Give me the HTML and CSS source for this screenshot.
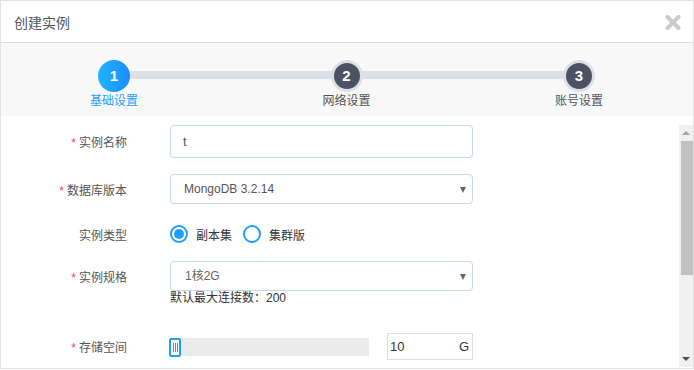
FILE: index.html
```html
<!DOCTYPE html>
<html>
<head>
  <meta charset="utf-8">
  <title>创建实例</title>
  <link rel="stylesheet" href="styles.css">
</head>
<body>
  <div class="dialog">
    <div class="dialog-header">
      <span class="dialog-title">创建实例</span>
      <svg class="close-icon" width="16" height="15" viewBox="0 0 16 15">
        <path d="M2.5 2 L13.5 13 M13.5 2 L2.5 13" stroke="#cbcbcb" stroke-width="4" stroke-linecap="round"/>
      </svg>
    </div>

    <!-- Steps -->
    <div class="steps">
      <div class="steps-line"></div>
      <div class="step active">
        <div class="step-circle">1</div>
        <div class="step-label">基础设置</div>
      </div>
      <div class="step">
        <div class="step-circle">2</div>
        <div class="step-label">网络设置</div>
      </div>
      <div class="step">
        <div class="step-circle">3</div>
        <div class="step-label">账号设置</div>
      </div>
    </div>

    <!-- Form -->
    <div class="dialog-body">
      <div class="form-area">
        <div class="form-row">
          <label class="form-label"><span class="req">*</span>实例名称</label>
          <input class="text-input" type="text" value="t">
        </div>
        <div class="form-row row-version">
          <label class="form-label"><span class="req">*</span>数据库版本</label>
          <div class="select-box">MongoDB 3.2.14<span class="caret"></span></div>
        </div>
        <div class="form-row row-type">
          <label class="form-label">实例类型</label>
          <div class="radio-group">
            <span class="radio checked"></span><span class="radio-text">副本集</span>
            <span class="radio"></span><span class="radio-text">集群版</span>
          </div>
        </div>
        <div class="form-row row-spec">
          <label class="form-label"><span class="req">*</span>实例规格</label>
          <div class="select-box spec">1核2G<span class="caret"></span></div>
        </div>
        <div class="form-hint">默认最大连接数：200</div>
        <div class="form-row row-storage">
          <label class="form-label"><span class="req">*</span>存储空间</label>
          <div class="slider">
            <div class="slider-handle"><i></i><i></i><i></i></div>
          </div>
          <div class="size-input"><span>10</span><span>G</span></div>
        </div>
      </div>

      <div class="scrollbar">
        <div class="scroll-btn"><span class="arrow-up"></span></div>
        <div class="scroll-track">
          <div class="scroll-thumb"></div>
        </div>
        <div class="scroll-btn"><span class="arrow-down"></span></div>
      </div>
    </div>
  </div>
</body>
</html>
```

FILE: styles.css
```css
body {
  margin: 0;
  background-color: #fff;
  font-family: "Liberation Sans", "Noto Sans CJK SC", sans-serif;
  font-size: 12px;
  color: #555;
}

.dialog {
  width: 694px;
  height: 369px;
  box-sizing: border-box;
  border: 1px solid #e2e2e2;
  background-color: #fff;
  overflow: hidden;
}

.dialog-header {
  height: 41px;
  border-bottom: 1px solid #dcdce6;
  display: flex;
  align-items: center;
  justify-content: space-between;
  padding: 0 12px 0 13px;
}

.dialog-title {
  font-size: 14px;
  color: #555;
}

.close-icon {
  display: block;
  margin-top: 1px;
}

.steps {
  position: relative;
  height: 73px;
  background-color: #f8f8f8;
  display: flex;
  justify-content: space-between;
  padding: 0 82px 0 81px;
}

.steps-line {
  position: absolute;
  left: 128px;
  right: 112px;
  top: 28px;
  height: 8px;
  background-color: #dcdfe6;
}

.step {
  position: relative;
  width: 64px;
  display: flex;
  flex-direction: column;
  align-items: center;
  padding-top: 17px;
}

.step-circle {
  width: 26px;
  height: 26px;
  border-radius: 50%;
  border: 3px solid #dcdfe6;
  background-color: #4c5261;
  color: #fff;
  font-size: 15px;
  font-weight: bold;
  line-height: 26px;
  text-align: center;
}

.step.active .step-circle {
  width: 32px;
  height: 32px;
  border: none;
  line-height: 32px;
  background: linear-gradient(90deg, #1fb5fe, #1b8cff);
}

.step-label {
  margin-top: 1px;
  font-size: 12px;
  line-height: 16px;
  color: #555;
}

.step.active .step-label {
  color: #1e9fff;
}

.dialog-body {
  display: flex;
  padding-top: 9px;
}

.form-area {
  flex: 1;
  height: 242px;
  overflow: hidden;
}

.form-row {
  display: flex;
  align-items: center;
}

.form-label {
  width: 126px;
  margin-right: 43px;
  text-align: right;
  color: #555;
  font-size: 12px;
}

.req {
  color: #f44;
  margin-right: 3px;
}

.text-input {
  width: 303px;
  height: 33px;
  box-sizing: border-box;
  border: 1px solid #c9d6e4;
  border-radius: 4px;
  padding: 0 12px;
  font-family: inherit;
  font-size: 13px;
  color: #555;
  outline: none;
}

.row-version {
  margin-top: 16px;
}

.select-box {
  position: relative;
  width: 303px;
  height: 30px;
  box-sizing: border-box;
  border: 1px solid #c9d6e4;
  border-radius: 4px;
  padding-left: 13px;
  line-height: 28px;
  font-size: 12px;
  color: #555;
}

.select-box.spec {
  padding-left: 14px;
  color: #666;
}

.caret {
  position: absolute;
  right: 6px;
  top: 12px;
  border-left: 3.5px solid transparent;
  border-right: 3.5px solid transparent;
  border-top: 6px solid #666;
}

.row-type {
  margin-top: 15px;
  height: 30px;
}

.radio-group {
  display: flex;
  align-items: center;
}

.radio {
  width: 14px;
  height: 14px;
  border: 2px solid #1e9fff;
  border-radius: 50%;
  position: relative;
}

.radio.checked::after {
  content: "";
  position: absolute;
  left: 2px;
  top: 2px;
  width: 10px;
  height: 10px;
  border-radius: 50%;
  background-color: #1e9fff;
}

.radio-text {
  margin: 0 11px 0 8px;
  color: #333;
}

.row-spec {
  margin-top: 12px;
}

.form-hint {
  margin-left: 169px;
  line-height: 14px;
  color: #333;
}

.row-storage {
  margin-top: 28px;
}

.slider {
  width: 199px;
  height: 18px;
  background-color: #ebebeb;
  position: relative;
}

.slider-handle {
  position: absolute;
  left: -1px;
  top: 0;
  width: 8px;
  height: 15px;
  border: 2px solid #1e9fff;
  border-radius: 2px;
  background-color: #fff;
  display: flex;
  justify-content: center;
  align-items: center;
  gap: 1px;
}

.slider-handle i {
  width: 1px;
  height: 9px;
  background-color: #1e9fff;
}

.size-input {
  margin-left: 18px;
  width: 86px;
  height: 27px;
  box-sizing: border-box;
  border: 1px solid #ddd;
  display: flex;
  align-items: center;
  justify-content: space-between;
  padding: 0 3px 0 2px;
  font-size: 13px;
  color: #333;
}

/* fake scrollbar */
.scrollbar {
  width: 14px;
  height: 242px;
  background-color: #f0f0f0;
  display: flex;
  flex-direction: column;
}

.scroll-btn {
  height: 16px;
  display: flex;
  align-items: center;
  justify-content: center;
}

.arrow-up {
  border-left: 4px solid transparent;
  border-right: 4px solid transparent;
  border-bottom: 4px solid #a3a3a3;
}

.arrow-down {
  border-left: 4px solid transparent;
  border-right: 4px solid transparent;
  border-top: 4px solid #505050;
}

.scroll-track {
  flex: 1;
  display: flex;
  justify-content: flex-end;
}

.scroll-thumb {
  width: 12px;
  height: 134px;
  background-color: #c1c1c1;
}
```
